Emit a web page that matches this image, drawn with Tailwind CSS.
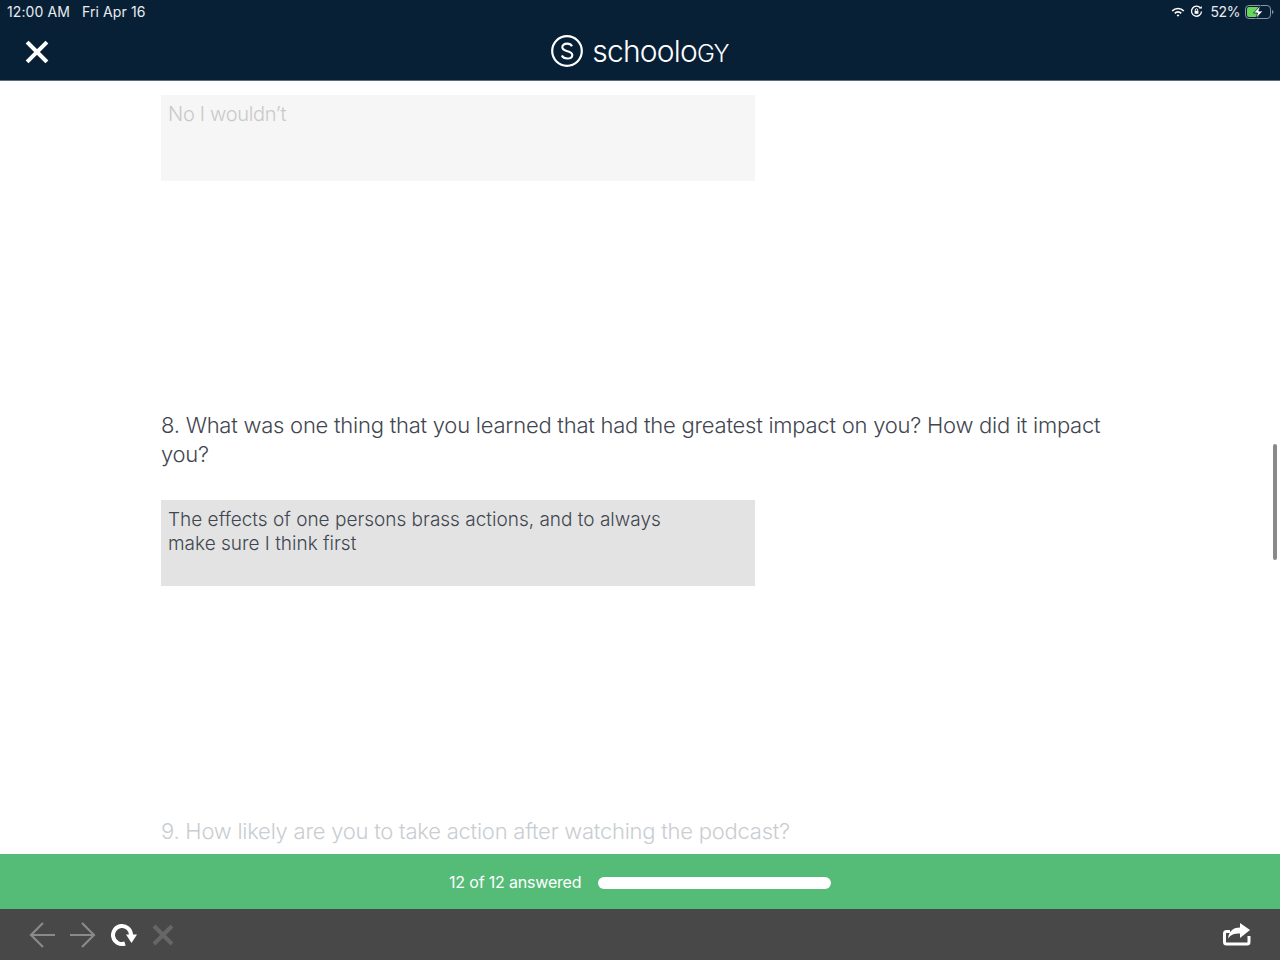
<!DOCTYPE html>
<html lang="en">

<head>
    <meta charset="UTF-8">
    <meta name="viewport" content="width=device-width, initial-scale=1">
    <title>Schoology assessment</title>
    <script src="https://cdn.jsdelivr.net/npm/@tailwindcss/browser@4"></script>
</head>

<body>
    <div class="relative flex h-[960px] w-[1280px] flex-col overflow-hidden bg-white font-['Inter',sans-serif]">
        <!-- header -->
        <header class="h-[81px] shrink-0 border-b border-[#5d6b78] bg-[#082036] text-white">
            <div class="flex h-[23px] items-center justify-between pl-[7px] pr-[5px] text-[14px] tracking-[0.1px] text-[#e8ecef]">
                <div class="flex gap-3">
                    <span>12:00 AM</span>
                    <span>Fri Apr 16</span>
                </div>
                <div class="flex items-center gap-[5px]">
                    <svg width="14" height="10" viewBox="0 0 14 10" fill="none" stroke="#fff" stroke-width="1.7">
                        <path d="M1.2 4a8 8 0 0 1 11.6 0" />
                        <path d="M3.8 6.3a4.4 4.4 0 0 1 6.4 0" />
                        <path d="M7 9.8 5.6 8.2a2 2 0 0 1 2.8 0Z" fill="#fff" stroke="none" />
                    </svg>
                    <svg width="13" height="13" viewBox="0 0 13 13" fill="none" stroke="#fff" stroke-width="1.3">
                        <path d="M10.500 3.200A5 5 0 1 0 11.500 6.500" />
                        <path d="M9 3.500h3L11.500 1Z" fill="#fff" stroke="none" />
                        <rect x="4.600" y="5.800" width="3.800" height="3" fill="#fff" stroke="none" />
                        <path d="M5.300 5.800V4.900a1.200 1.200 0 0 1 2.400 0v.9" stroke-width="1" />
                    </svg>
                    <span class="ml-[2px] tracking-[-0.4px]">52%</span>
                    <svg width="30" height="14" viewBox="0 0 30 14" fill="none">
                        <rect x="0.500" y="0.500" width="25" height="13" rx="3.500" stroke="#8b96a0" />
                        <rect x="2" y="2" width="12" height="10" rx="2" fill="#66d75a" />
                        <path d="M27 5v4a2 2 0 0 0 1.500-2A2 2 0 0 0 27 5Z" fill="#8b96a0" />
                        <path d="M15.500 0.500 8.500 8h4l-1.500 5.500L18 6h-4.200Z" fill="#fff" stroke="#082036" stroke-width="0.800" />
                    </svg>
                </div>
            </div>
            <div class="relative flex h-[57px] items-center justify-center pb-[1px]">
                <svg class="absolute left-[25px] top-[17px]" width="24" height="24" viewBox="0 0 24 24" fill="none" stroke="#fff" stroke-width="4" stroke-linecap="square">
                    <path d="M3.500 3.500 20.500 20.500M20.500 3.500 3.500 20.500" />
                </svg>
                <div class="flex items-center gap-[9px]">
                    <svg width="32" height="32" viewBox="0 0 32 32" fill="none" stroke="#fff">
                        <circle cx="16" cy="16" r="14.800" stroke-width="2.200" />
                        <path d="M21 11.200c-.9-1.700-2.700-2.600-4.900-2.600-2.700 0-4.800 1.400-4.800 3.700 0 5.100 10 2.600 10 7.600 0 2.300-2.200 3.600-5 3.600-2.500 0-4.500-1-5.500-3" stroke-width="2.100" />
                    </svg>
                    <span class="text-[30px] leading-none font-[350] tracking-[-0.8px]">schoolo<span class="text-[24px]">GY</span></span>
                </div>
            </div>
        </header>

        <!-- quiz content -->
        <main class="min-h-0 flex-1 pl-[161px] pt-[14px] text-[22px] font-light leading-[29px] tracking-[-0.24px] text-[#3f4650]">
            <div class="h-[86px] w-[594px] bg-[#f6f6f6] px-[7px] pt-[6px] text-[20px] leading-[26px] tracking-[-0.3px] text-[#c9c9c9]">No I wouldn’t</div>
            <p class="mt-[230px] w-[960px]">8. What was one thing that you learned that had the greatest impact on you? How did it impact you?</p>
            <div class="mt-[31px] h-[86px] w-[594px] bg-[#e3e3e3] pl-[7px] pr-[70px] pt-[8px] text-[19px] leading-[24px] tracking-normal">The effects of one persons brass actions, and to always make sure I think first</div>
            <p class="mt-[231px] text-[#c9cdd1]">9. How likely are you to take action after watching the podcast?</p>
        </main>

        <!-- progress -->
        <div class="flex h-[55px] shrink-0 items-center bg-[#55bc78] pl-[449px] text-white">
            <span class="text-[16px] tracking-[-0.18px]">12 of 12 answered</span>
            <div class="ml-[17px] mt-[2px] h-[12px] w-[233px] rounded-full bg-white"></div>
        </div>

        <!-- browser toolbar -->
        <footer class="flex h-[51px] shrink-0 items-center justify-between bg-[#484848] pl-[29px] pr-[29px]">
            <div class="flex items-center gap-[15px]">
                <svg width="26" height="26" viewBox="0 0 26 26" fill="none" stroke="#8a8a8a" stroke-width="2.200">
                    <path d="M26 13H2M14 1 2 13l12 12" />
                </svg>
                <svg width="26" height="26" viewBox="0 0 26 26" fill="none" stroke="#8a8a8a" stroke-width="2.200">
                    <path d="M0 13h24M12 1l12 12-12 12" />
                </svg>
                <svg width="28" height="24" viewBox="0 0 28 24" fill="none">
                    <path d="M14 20.500A9 9 0 1 1 20 12" stroke="#fff" stroke-width="4" />
                    <path d="M15 11.500h11L20.500 20Z" fill="#fff" />
                </svg>
                <svg class="-ml-[2px]" width="22" height="22" viewBox="0 0 22 22" fill="none" stroke="#666" stroke-width="4">
                    <path d="M2 2 20 20M20 2 2 20" />
                </svg>
            </div>
            <svg width="30" height="26" viewBox="0 0 30 26" fill="none">
                <path d="M9 9.500H5.500a2 2 0 0 0-2 2V20a2 2 0 0 0 2 2H26a2 2 0 0 0 2-2v-6" stroke="#fff" stroke-width="3" />
                <path d="M29 8 19 1v4.500c-6 0-11 3-12 11 3-4 6-5 12-5v4.500Z" fill="#fff" />
            </svg>
        </footer>

        <!-- scrollbar -->
        <div class="absolute left-[1273px] top-[444px] h-[116px] w-[4px] rounded-full bg-[#8a8a8a]"></div>
    </div>
</body>

</html>
